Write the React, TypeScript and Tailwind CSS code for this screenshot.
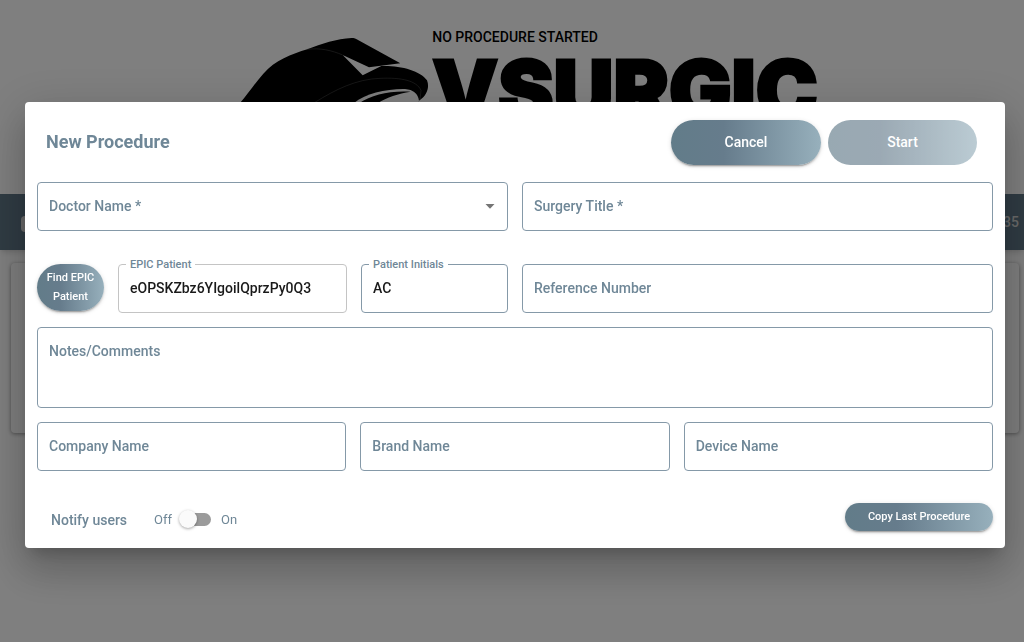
import React from 'react';
import clsx from 'clsx';

const gradient = 'bg-linear-to-r from-[#627c89] via-[#667c8c] via-35% to-[#97b0bc] text-white font-medium';
const raised = 'shadow-[0_3px_1px_-2px_rgba(0,0,0,0.2),0_2px_2px_0_rgba(0,0,0,0.14),0_1px_5px_0_rgba(0,0,0,0.12)]';

type FieldProps = {
  id: string;
  label: string;
  value?: string;
  multiline?: boolean;
  muted?: boolean;
  className?: string;
};

const Field: React.FC<FieldProps> = ({ id, label, value, multiline, muted, className }) => {
  const box = clsx(
    'block w-full rounded border bg-white px-[11px] text-sm font-medium text-black/90 outline-none',
    muted ? 'border-[#c4c4c4]' : 'border-[#8599a8]'
  );

  return (
    <div className={clsx('relative', className)}>
      {multiline ? (
        <textarea id={id} defaultValue={value} className={clsx(box, 'h-[81px] resize-none py-3')} />
      ) : (
        <input id={id} type="text" defaultValue={value} readOnly={muted} className={clsx(box, 'h-[49px] pb-0.5')} />
      )}
      <label
        htmlFor={id}
        className={clsx(
          'absolute whitespace-nowrap font-medium text-[#6f8797]',
          value ? '-top-1.5 left-2 bg-white px-1 text-[11px] leading-[14px]' : 'top-3 left-3 text-sm leading-6'
        )}
      >
        {label}
      </label>
    </div>
  );
};

const DoctorSelect: React.FC = () => (
  <div className="relative">
    <select
      id="doctor"
      defaultValue=""
      className="block h-[49px] w-full appearance-none rounded border border-[#8599a8] bg-white px-3 text-sm outline-none"
    >
      <option value="" />
    </select>
    <label htmlFor="doctor" className="absolute top-3 left-3 text-sm leading-6 font-medium text-[#6f8797]">
      Doctor Name *
    </label>
    <svg viewBox="0 0 10 5" className="pointer-events-none absolute top-[22px] right-[13px] h-[5px] w-[10px]">
      <path d="M0.5 0h9L5 4.8z" fill="#757575" />
    </svg>
  </div>
);

const HatLogo: React.FC = () => (
  <svg viewBox="60 55 576 195" className="mt-[38px] h-[65px] w-[192px] shrink-0" aria-hidden="true">
    <path d="M60 250C85 222 105 190 130 162C165 122 215 103 262 89C305 72 350 57 395 55Q403 54 410 59L541 131L447 143L368 106L428 167L484 139C540 137 600 152 621 182C629 202 622 228 597 243L596 250Z" />
    <path d="M402 250C435 222 500 207 555 208C580 210 594 222 597 243L596 250Z" fill="#fff" />
    <path d="M418 250C455 226 510 212 572 216C535 222 500 233 474 250Z" />
    <path
      d="M262 89C300 84 335 92 368 106M285 248C345 210 410 178 480 176C545 173 590 183 603 212L600 240"
      fill="none"
      stroke="#5a5a5a"
      strokeWidth="1.5"
    />
  </svg>
);

const Page: React.FC = () => (
  <div>
    <header className="flex h-[194px] justify-center overflow-hidden pl-[34px]">
      <HatLogo />
      <div className="pt-[27px]">
        <p className="text-sm leading-5 font-medium">NO PROCEDURE STARTED</p>
        <div className="font-[Inter,sans-serif] text-[83px] leading-[86px] font-black [-webkit-text-stroke:3px_black]">
          VSURGIC
        </div>
      </div>
    </header>
    <div className="flex h-14 items-center justify-between bg-[#607888] px-[5px] text-[#d4d4d4] shadow-md">
      <span className="mt-1 ml-4 h-4 w-5 rounded-sm bg-[#d4d4d4]" />
      <span className="text-sm font-medium">10:35</span>
    </div>
    <section className="mt-[13px] mr-[5px] ml-[11px] h-[170px] rounded bg-white shadow-[0_1px_4px_rgba(0,0,0,0.4)]" />
  </div>
);

export default function App() {
  return (
    <div className="min-h-screen bg-white font-[Roboto,sans-serif] text-black">
      <Page />
      <div className="fixed inset-0 flex items-start overflow-auto bg-black/50 pt-[102px] pr-[19px] pl-[25px]">
        <form
          role="dialog"
          aria-labelledby="dialog-title"
          className="w-full rounded bg-white px-3 pb-3 shadow-[0_11px_15px_-7px_rgba(0,0,0,0.2),0_24px_38px_3px_rgba(0,0,0,0.14),0_9px_46px_8px_rgba(0,0,0,0.12)]"
        >
          <div className="flex h-20 items-center gap-[7px] pr-4 pl-[9px]">
            <h2 id="dialog-title" className="flex-1 text-lg font-bold text-[#6f8797]">
              New Procedure
            </h2>
            <button type="button" className={clsx(gradient, raised, 'h-[45px] w-[150px] rounded-full text-sm')}>
              Cancel
            </button>
            <button type="button" disabled className={clsx(gradient, 'h-[45px] w-[149px] rounded-full text-sm opacity-65')}>
              Start
            </button>
          </div>

          <div className="grid grid-cols-2 gap-[14px]">
            <DoctorSelect />
            <Field id="title" label="Surgery Title *" />
          </div>

          <div className="mt-[33px] grid grid-cols-2 gap-[14px]">
            <div className="flex gap-[14px]">
              <button
                type="button"
                className={clsx(gradient, raised, 'h-[47px] w-[67px] shrink-0 rounded-3xl px-2 pb-0.5 text-[11px] leading-[19px]')}
              >
                Find EPIC Patient
              </button>
              <Field id="epic" label="EPIC Patient" value="eOPSKZbz6YIgoilQprzPy0Q3" muted className="flex-1" />
              <Field id="initials" label="Patient Initials" value="AC" className="w-[147px]" />
            </div>
            <Field id="reference" label="Reference Number" />
          </div>

          <Field id="notes" label="Notes/Comments" multiline className="mt-[14px]" />

          <div className="mt-[14px] grid grid-cols-3 gap-[14px]">
            <Field id="company" label="Company Name" />
            <Field id="brand" label="Brand Name" />
            <Field id="device" label="Device Name" />
          </div>

          <div className="mt-8 flex items-start justify-between">
            <div className="flex h-[33px] items-center pl-[14px] text-[#6f8797]">
              <label htmlFor="notify" className="text-sm font-medium">
                Notify users
              </label>
              <span className="ml-[27px] text-[13px]">Off</span>
              <input
                id="notify"
                type="checkbox"
                role="switch"
                className="relative mr-[10px] ml-[13px] h-[13px] w-[26px] appearance-none rounded-full bg-[#9b9b9b] before:absolute before:-top-[3px] before:-left-[6px] before:size-[18px] before:rounded-full before:bg-[#fafafa] before:shadow-[0_1px_3px_rgba(0,0,0,0.35)]"
              />
              <span className="text-[13px]">On</span>
            </div>
            <button type="button" className={clsx(gradient, raised, 'h-7 w-[148px] rounded-full text-[11px]')}>
              Copy Last Procedure
            </button>
          </div>
        </form>
      </div>
    </div>
  );
}
